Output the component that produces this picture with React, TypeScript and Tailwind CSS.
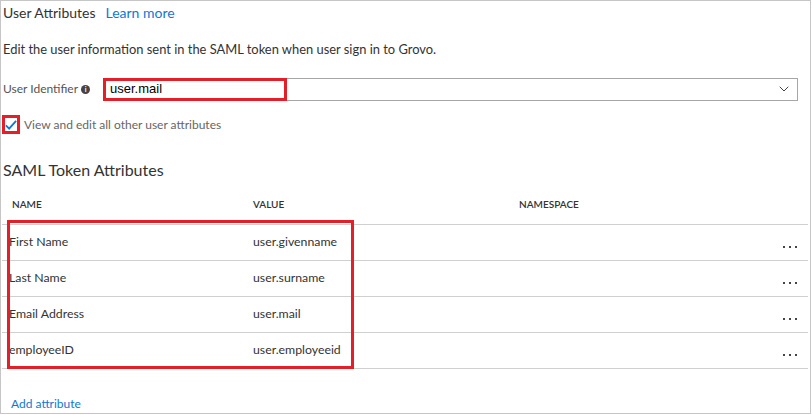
import { ChevronDown } from "lucide-react";

const rows = [
    { name: "First Name", value: "user.givenname" },
    { name: "Last Name", value: "user.surname" },
    { name: "Email Address", value: "user.mail" },
    { name: "employeeID", value: "user.employeeid" },
];

function Dots() {
    return (
        <div className="flex gap-[4px] items-center">
            <span className="w-[2px] h-[2px] bg-[#444]" />
            <span className="w-[2px] h-[2px] bg-[#444]" />
            <span className="w-[2px] h-[2px] bg-[#444]" />
        </div>
    );
}

export default function App() {
    return (
        <div className="w-[812px] h-[415px] bg-white">
            <div className="w-[811px] h-[414px] border border-[#c6c6c6] font-['Segoe_UI',Lato,sans-serif] text-[#333]">
                <div className="flex items-center h-[22px] pl-[2px] gap-[10px]">
                    <span className="text-[14px]">User Attributes</span>
                    <span className="text-[14px] text-[#0f78d4]">Learn more</span>
                </div>

                <p className="mt-[18px] h-[16px] leading-[16px] pl-[2px] text-[12.9px]">
                    Edit the user information sent in the SAML token when user sign in to Grovo.
                </p>

                <div className="mt-[21px] flex items-center h-[22px]">
                    <div className="w-[102px] pl-[2px] flex items-center gap-[3px] text-[12px] text-[#555]">
                        <span>User Identifier</span>
                        <span className="w-[9px] h-[9px] rounded-full bg-[#444] text-white text-[7px] font-bold leading-[9px] text-center">i</span>
                    </div>
                    <div className="relative w-[695px] h-[23px] border border-[#a6a6a6] flex items-center pl-[6px] pr-[5px]">
                        <span className="font-['Liberation_Sans',Arial,sans-serif] text-[13px] text-black">user.mail</span>
                        <ChevronDown className="ml-auto text-[#444]" size={16} strokeWidth={1.5} />
                        <div className="absolute -left-[1px] -top-[1px] w-[184px] h-[23px] border-[3px] border-[#e51f2a]" />
                    </div>
                </div>

                <div className="mt-[15px] flex items-center h-[19px] pl-[1px] gap-[4px]">
                    <div className="w-[18px] h-[19px] border-[3px] border-[#e51f2a] flex items-center justify-center">
                        <svg width="13" height="12" viewBox="0 0 13 12">
                            <path d="M1 6.5 L4.5 10 L12 1.5" fill="none" stroke="#0f78d4" strokeWidth="2" />
                        </svg>
                    </div>
                    <span className="text-[12px] text-[#666]">View and edit all other user attributes</span>
                </div>

                <h2 className="mt-[25px] pl-[2px] h-[22px] leading-[22px] text-[16px] text-[#333]">SAML Token Attributes</h2>

                <div className="relative mt-[3px] ml-[1px] w-[806px]">
                    <div className="flex items-center h-[41px] border-b border-[#d0d0d0] text-[10px] font-semibold text-[#333] uppercase">
                        <span className="w-[251px] pl-[10px]">Name</span>
                        <span className="w-[266px]">Value</span>
                        <span>Namespace</span>
                    </div>
                    {rows.map((r) => (
                        <div key={r.name} className="flex items-center h-[36px] border-b border-[#d0d0d0] text-[12.3px] text-[#333]">
                            <span className="w-[251px] pl-[7px]">{r.name}</span>
                            <span className="w-[266px]">{r.value}</span>
                            <span className="flex-1" />
                            <div className="w-[25px] pt-[8px]">
                                <Dots />
                            </div>
                        </div>
                    ))}
                    <div className="absolute left-[5px] top-[36px] w-[347px] h-[149px] border-[3px] border-[#e51f2a]" />
                </div>

                <p className="mt-[27px] pl-[10px] h-[16px] leading-[16px] text-[12px] text-[#0f78d4]">Add attribute</p>
            </div>
        </div>
    );
}
